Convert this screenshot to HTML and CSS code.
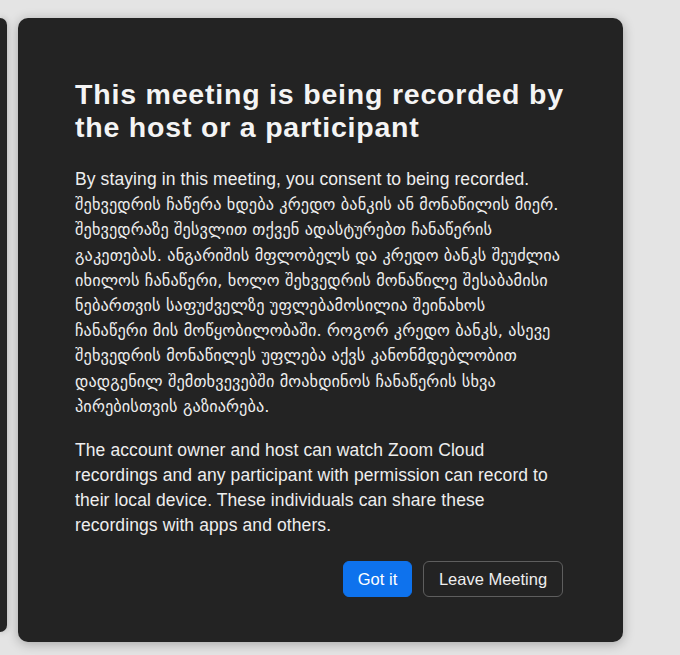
FILE: index.html
```html
<!DOCTYPE html>
<html lang="en">
<head>
<meta charset="utf-8">
<title>Recording consent</title>
<link rel="stylesheet" href="styles.css">
</head>
<body>
<div class="stage">
  <div class="side-panel"></div>
  <div class="dialog" role="dialog">
    <h1 class="title">This meeting is being recorded by the host or a participant</h1>
    <p class="text text-consent">By staying in this meeting, you consent to being recorded. <span class="ka" lang="ka">შეხვედრის ჩაწერა ხდება კრედო ბანკის ან მონაწილის მიერ. შეხვედრაზე შესვლით თქვენ ადასტურებთ ჩანაწერის<br>გაკეთებას. ანგარიშის მფლობელს და კრედო ბანკს შეუძლია<br>იხილოს ჩანაწერი, ხოლო შეხვედრის მონაწილე შესაბამისი<br>ნებართვის საფუძველზე უფლებამოსილია შეინახოს<br>ჩანაწერი მის მოწყობილობაში. როგორ კრედო ბანკს, ასევე<br>შეხვედრის მონაწილეს უფლება აქვს კანონმდებლობით<br>დადგენილ შემთხვევებში მოახდინოს ჩანაწერის სხვა<br>პირებისთვის გაზიარება.</span></p>
    <p class="text">The account owner and host can watch Zoom Cloud recordings and any participant with permission can record to their local device. These individuals can share these recordings with apps and others.</p>
    <div class="actions">
      <button class="btn btn-primary">Got it</button>
      <button class="btn btn-secondary">Leave Meeting</button>
    </div>
  </div>
</div>
</body>
</html>
```
FILE: styles.css
```css
html, body {
  margin: 0;
  padding: 0;
}
body {
  background: #e4e4e4;
  font-family: "Liberation Sans", Arial, "DejaVu Sans", sans-serif;
  width: 680px;
  height: 655px;
  overflow: hidden;
}
.stage {
  display: flex;
  align-items: flex-start;
  gap: 11px;
  padding-top: 18px;
}
.side-panel {
  width: 7px;
  height: 614px;
  background: #232323;
  border-radius: 0 8px 8px 0;
  box-shadow: 0 0 6px rgba(0,0,0,0.25);
}
.dialog {
  box-sizing: border-box;
  width: 605px;
  height: 624px;
  background: #232323;
  border-radius: 10px;
  box-shadow: 0 2px 12px rgba(0,0,0,0.28);
  padding: 60px 55px 45px 57px;
  color: #f2f2f2;
  display: flex;
  flex-direction: column;
}
.title {
  margin: 0 0 23px;
  font-size: 28.5px;
  letter-spacing: 0.8px;
  line-height: 33px;
  font-weight: bold;
  color: #f4f4f4;
}
.text {
  margin: 0 0 19px;
  font-size: 17.5px;
  letter-spacing: 0.1px;
  line-height: 25px;
  color: #eeeeee;
}
.text-consent {
  line-height: 25.2px;
}
.ka {
  font-family: "DejaVu Sans", sans-serif;
  font-size: 16.3px;
  letter-spacing: 0.1px;
}
.actions {
  display: flex;
  justify-content: flex-end;
  gap: 11px;
  margin-top: auto;
  padding-right: 5px;
}
.btn {
  font-family: "Liberation Sans", Arial, sans-serif;
  font-size: 16.5px;
  height: 36px;
  border-radius: 6px;
  padding: 0;
  cursor: pointer;
}
.btn-primary {
  background: #0e72ed;
  border: 1px solid #0e72ed;
  color: #ffffff;
  width: 69px;
}
.btn-secondary {
  background: transparent;
  border: 1px solid #5e5e5e;
  color: #eeeeee;
  width: 140px;
}
```
